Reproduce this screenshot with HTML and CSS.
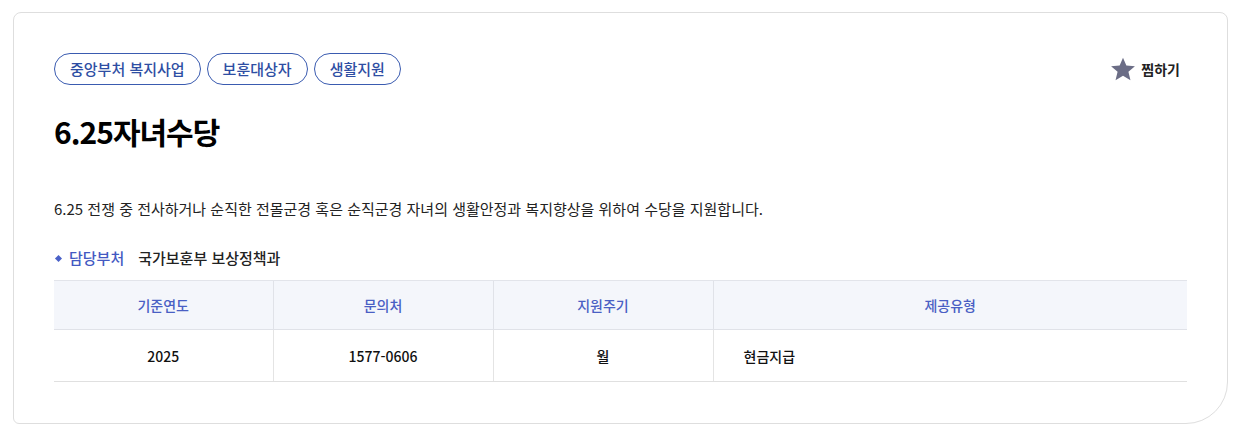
FILE: index.html
```html
<!DOCTYPE html>
<html lang="ko">
<head>
<meta charset="utf-8">
<link rel="stylesheet" href="styles.css">
</head>
<body>
<div class="card">
  <div class="top">
    <ul class="tags">
      <li class="tag">중앙부처 복지사업</li>
      <li class="tag">보훈대상자</li>
      <li class="tag">생활지원</li>
    </ul>
    <button class="fav">
      <svg width="26" height="26" viewBox="0 0 24 24"><path d="M12 1.5l3.1 7.3 7.9.6-6 5.2 1.9 7.7L12 18.2l-6.9 4.1L7 14.6 1 9.4l7.9-.6z" fill="#6b6d86"/></svg>
      <span>찜하기</span>
    </button>
  </div>
  <h1 class="title">6.25자녀수당</h1>
  <p class="desc">6.25 전쟁 중 전사하거나 순직한 전몰군경 혹은 순직군경 자녀의 생활안정과 복지향상을 위하여 수당을 지원합니다.</p>
  <div class="dept">
    <span class="dept-label">담당부처</span>
    <span class="dept-value">국가보훈부 보상정책과</span>
  </div>
  <table class="info">
    <thead>
      <tr>
        <th class="c1">기준연도</th>
        <th class="c2">문의처</th>
        <th class="c3">지원주기</th>
        <th class="c4">제공유형</th>
      </tr>
    </thead>
    <tbody>
      <tr>
        <td>2025</td>
        <td>1577-0606</td>
        <td>월</td>
        <td class="left">현금지급</td>
      </tr>
    </tbody>
  </table>
</div>
</body>
</html>
```

FILE: styles.css
```css
* { box-sizing: border-box; }
html, body { margin: 0; padding: 0; background: #fff; }
body {
  padding: 12px 12px 13px 13px;
  font-family: "Noto Sans CJK KR", "Noto Sans", sans-serif;
  color: #111;
}
.card {
  border: 1px solid #dedede;
  border-radius: 8px 8px 42px 6px;
  padding: 40px 40px 41px 40px;
  height: 412px;
}
.top {
  display: flex;
  justify-content: space-between;
  align-items: center;
}
.tags {
  list-style: none;
  margin: 0;
  padding: 0;
  display: flex;
  gap: 6px;
}
.tag {
  height: 32px;
  line-height: 30px;
  padding: 0 15px;
  border: 1px solid #3a5bb0;
  border-radius: 16px;
  color: #2e4ea3;
  font-size: 15px;
  font-weight: 500;
}
.fav {
  display: flex;
  align-items: center;
  gap: 5px;
  background: none;
  border: 0;
  padding: 0;
  margin-right: 7px;
  font-family: inherit;
  font-size: 14px;
  font-weight: 700;
  color: #222;
}
.title {
  margin: 26px 0 0;
  font-size: 30px;
  line-height: 40px;
  font-weight: 700;
  letter-spacing: -1px;
  color: #000;
}
.desc {
  margin: 46px 0 0;
  font-size: 15px;
  line-height: 24px;
  color: #222;
}
.dept {
  margin-top: 26px;
  display: flex;
  align-items: center;
  font-size: 15px;
  line-height: 22px;
  font-weight: 500;
}
.dept-label {
  position: relative;
  padding-left: 15px;
  color: #4359c2;
  margin-right: 14px;
}
.dept-label::before {
  content: "";
  position: absolute;
  left: 2px;
  top: 9px;
  width: 5px;
  height: 5px;
  background: #4a61c8;
  transform: rotate(45deg);
}
.dept-value { color: #222; }
.info {
  margin-top: 11px;
  width: 100%;
  border-collapse: collapse;
  table-layout: fixed;
  font-size: 14px;
}
.info th {
  height: 49px;
  background: #f4f6fb;
  color: #4a5fc4;
  font-weight: 500;
  border-top: 1px solid #e2e4ea;
  border-bottom: 1px solid #e0e2e8;
  border-left: 1px solid #e0e2e8;
}
.info th:first-child, .info td:first-child { border-left: 0; }
.c1 { width: 219px; }
.c2 { width: 220px; }
.c3 { width: 220px; }
.info td {
  height: 52px;
  text-align: center;
  font-weight: 500;
  color: #111;
  border-bottom: 1px solid #e0e0e0;
  border-left: 1px solid #e4e4e4;
}
.info td.left { text-align: left; padding-left: 30px; }
```
